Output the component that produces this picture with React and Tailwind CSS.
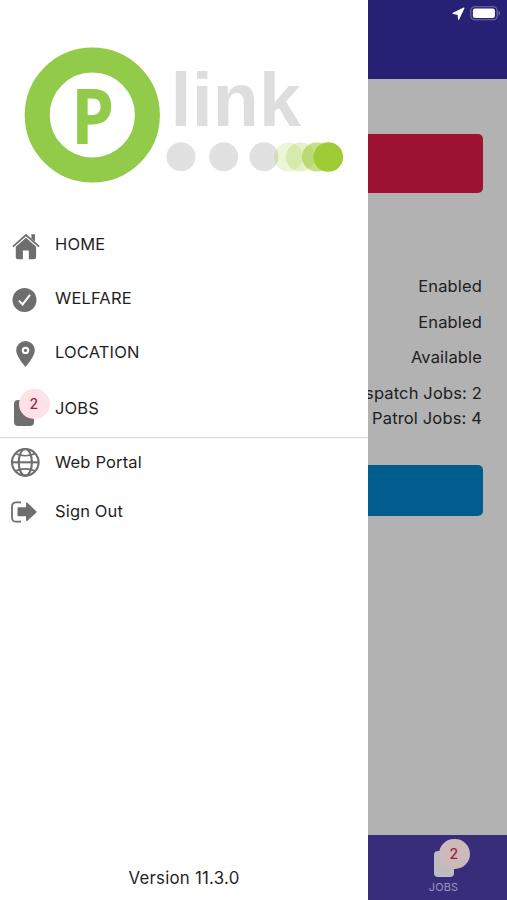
function HomeIcon() {
  return (
    <svg width="28" height="27" viewBox="0 0 28 27" fill="#6e6e6e">
      <path d="M14 4.8 3.8 13.7V24.2a2.1 2.1 0 0 0 2.1 2.1h5v-8.8h5.9v8.8h5.2a2.1 2.1 0 0 0 2.1-2.1V13.7Z" />
      <path d="M19.4 1.2H23v7.4l-3.6-3.2Z" />
      <path d="M.9 13.7 14 2l13.1 11.7" fill="none" stroke="#6e6e6e" strokeWidth="1.7" />
    </svg>
  )
}

function WelfareIcon() {
  return (
    <svg width="25" height="24" viewBox="0 0 25 24">
      <circle cx="12.5" cy="12" r="12" fill="#6e6e6e" />
      <path d="m7 12.6 3.6 3.8L18 6.8" fill="none" stroke="#fff" strokeWidth="2" />
    </svg>
  )
}

function LocationIcon() {
  return (
    <svg width="19" height="26" viewBox="0 0 19 26">
      <path d="M9.5 0A9.3 9.3 0 0 0 .2 9.3C.2 15.7 9.5 26 9.5 26s9.3-10.3 9.3-16.7A9.3 9.3 0 0 0 9.5 0Z" fill="#6e6e6e" />
      <circle cx="9.5" cy="9.4" r="3.7" fill="#fff" />
      <circle cx="9.5" cy="9.4" r="1.6" fill="#6e6e6e" />
    </svg>
  )
}

function GlobeIcon() {
  return (
    <svg width="30" height="30" viewBox="0 0 30 30" fill="none" stroke="#6e6e6e" strokeWidth="2.1">
      <circle cx="15.3" cy="15.3" r="13.3" />
      <ellipse cx="15.3" cy="15.3" rx="6.6" ry="13.3" />
      <path d="M2 15.3h26.6" />
      <path d="M5.5 6.5c5.4 3 14.2 3 19.6 0M5.5 24.1c5.4-3 14.2-3 19.6 0" strokeWidth="1.7" />
    </svg>
  )
}

function SignOutIcon() {
  return (
    <svg width="26" height="22" viewBox="0 0 26 22">
      <path d="M10 1.3H5a4 4 0 0 0-4 4v11.4a4 4 0 0 0 4 4h5" fill="none" stroke="#6e6e6e" strokeWidth="1.8" />
      <path d="M7.5 6.2H15V2.3a.8.8 0 0 1 1.4-.6l8.8 8.6a1 1 0 0 1 0 1.4l-8.8 8.1a.8.8 0 0 1-1.4-.6v-4H7.5a1 1 0 0 1-1-1V7.2a1 1 0 0 1 1-1Z" fill="#6e6e6e" />
    </svg>
  )
}

function Logo() {
  return (
    <svg width="368" height="218" viewBox="0 0 368 218" className="block shrink-0">
      <circle cx="92.3" cy="115" r="55.1" fill="none" stroke="#92cb49" strokeWidth="25" />
      <text transform="translate(71 144.3) scale(.9 1)" fontFamily="Open Sans, sans-serif" fontWeight="700" fontSize="76.5" fill="#92cb49">P</text>
      <text x="170.6" y="126" fontFamily="Liberation Sans, sans-serif" fontWeight="700" fontSize="76" fill="#dedede" textLength="130.5" lengthAdjust="spacingAndGlyphs">link</text>
      <g fill="#e1e1e1">
        <circle cx="181" cy="156.8" r="14.5" />
        <circle cx="223.7" cy="156.8" r="14.5" />
        <circle cx="264" cy="156.8" r="14.5" />
      </g>
      <circle cx="288.5" cy="157" r="14.5" fill="#9fcb3b" fillOpacity=".2" />
      <circle cx="300.5" cy="157" r="14.5" fill="#9fcb3b" fillOpacity=".28" />
      <circle cx="316.5" cy="157" r="14.5" fill="#9fcb3b" fillOpacity=".6" />
      <circle cx="328.3" cy="157" r="14.8" fill="#9fcb35" />
    </svg>
  )
}

function JobsIcon() {
  return (
    <div className="relative mt-[9px] h-[26px] w-5 rounded bg-[#6e6e6e]">
      <span className="absolute -top-[11.5px] left-[4.5px] flex h-[30px] w-[31px] items-center justify-center rounded-full bg-[#ffe1e7] text-sm font-medium text-[#9c2545]">
        2
      </span>
    </div>
  )
}

function MenuItem({ icon, label, className = 'h-[54px]', labelClass = 'pb-0.5' }) {
  return (
    <div className={`flex shrink-0 items-center ${className}`}>
      <div className="flex w-[55px] items-center pl-[10px]">{icon}</div>
      <span className={labelClass}>{label}</span>
    </div>
  )
}

export default function App() {
  return (
    <div className="flex h-[900px] w-[507px] overflow-hidden bg-[#b2b2b2] font-['Inter',sans-serif] text-[16.5px] leading-6 tracking-[0.15px] text-[#1f1f1f]">
      {/* Drawer */}
      <aside className="flex w-[368px] shrink-0 flex-col bg-white">
        <Logo />
        <nav>
          <MenuItem icon={<div className="pt-0.5 pl-[1.5px]"><HomeIcon /></div>} label="HOME" />
          <MenuItem icon={<div className="pt-0.5 pl-0.5"><WelfareIcon /></div>} label="WELFARE" />
          <MenuItem icon={<div className="pt-px pl-1.5"><LocationIcon /></div>} label="LOCATION" />
          <MenuItem
            icon={<div className="pl-1"><JobsIcon /></div>}
            label="JOBS"
            className="h-[58px] border-b border-[#d2d2d2]"
          />
          <MenuItem icon={<GlobeIcon />} label="Web Portal" className="h-12" labelClass="" />
          <MenuItem icon={<div className="pt-px pl-[0.5px]"><SignOutIcon /></div>} label="Sign Out" className="h-[50px]" labelClass="pb-px" />
        </nav>
        <p className="mt-auto mb-[10px] text-center text-[16.8px] tracking-[0.25px]">Version 11.3.0</p>
      </aside>

      {/* Dimmed page behind */}
      <main className="flex w-[139px] shrink-0 flex-col overflow-hidden">
        <header className="flex h-[79px] shrink-0 items-start justify-end bg-[#262174] pt-[6px] pr-[6px]">
          <svg width="49" height="15" viewBox="0 0 49 15">
            <path d="M11.9 2 1.2 7.4l5 .9.4 5Z" fill="#fff" stroke="#fff" strokeWidth="1.2" strokeLinejoin="round" />
            <rect x="18.8" y=".8" width="26.4" height="13" rx="3.8" fill="none" stroke="#7572a8" strokeWidth="1.1" />
            <rect x="20.9" y="2.6" width="22" height="9.4" rx="2" fill="#fff" />
            <path d="M46.6 5v4.5c1.8-.6 1.8-3.9 0-4.5Z" fill="#7572a8" />
          </svg>
        </header>
        <div className="mt-[55px] mr-[24.5px] h-[58.5px] shrink-0 rounded-r-[5px] bg-[#9b1330]" />
        <div className="mt-[81.5px] mr-[25px] flex flex-col items-end whitespace-nowrap text-[#202020]">
          <span className="mb-3">Enabled</span>
          <span className="mb-[11px]">Enabled</span>
          <span className="mb-3">Available</span>
          <span className="mb-px">Dispatch Jobs: 2</span>
          <span>Patrol Jobs: 4</span>
        </div>
        <div className="mt-[35px] mr-[24.5px] h-[50.5px] shrink-0 rounded-r-[5px] bg-[#005d8e]" />
        <footer className="mt-auto flex h-[65px] shrink-0 flex-col items-center bg-[#372d7b] pl-[12px]">
          <div className="relative mt-[16px] h-[26px] w-5 rounded bg-[#bdbdc0]">
            <span className="absolute -top-[12px] left-[5px] flex h-[30px] w-[31px] items-center justify-center rounded-full bg-[#ccb9b9] text-sm font-medium text-[#a01f3c]">
              2
            </span>
          </div>
          <span className="mt-[2px] text-[11px] leading-4 text-[#9b96bd]">JOBS</span>
        </footer>
      </main>
    </div>
  )
}
